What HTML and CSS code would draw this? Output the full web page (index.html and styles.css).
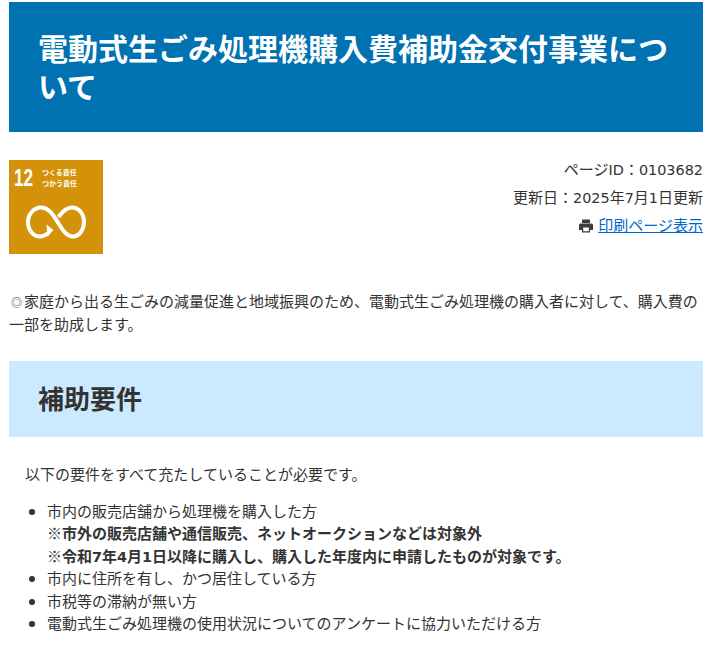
FILE: index.html
```html
<!DOCTYPE html>
<html lang="ja">
<head><meta charset="utf-8"><title>補助金</title><link rel="stylesheet" href="styles.css"></head>
<body>
<h1 class="title">電動式生ごみ処理機購入費補助金交付事業について</h1>
<div class="meta">
  <div class="sdg">
    <div class="sdg-head"><span class="sdg-num">12</span><span class="sdg-label">つくる責任<br>つかう責任</span></div>
    <svg class="sdg-icon" viewBox="0 0 60 36" width="60" height="36" fill="none" stroke="#fff" stroke-width="4"><path d="M23 28.500C20 31 17 32.500 14 32.500C7 32.500 2 26 2 18C2 10 8 3.500 15 3.500C22 3.500 26 9 31 17C36 25 40 32.500 47 32.500C53 32.500 58 26 58 18C58 10 53 3.500 46 3.500C40 3.500 36 8 32.500 13"/><path fill="#fff" stroke="none" d="M27.500 26L20.500 20.500L21.500 32.500Z"/></svg>
  </div>
  <div class="info">
    <p>ページ<span class="latin">ID</span>：<span class="latin">0103682</span></p>
    <p>更新日：<span class="latin">2025</span>年<span class="latin">7</span>月<span class="latin">1</span>日更新</p>
    <p><svg class="printer" viewBox="0 0 16 16" width="16" height="16"><path fill="#3c3c3c" fill-rule="evenodd" d="M4 1.500h8V5H4zM2.500 5.500h11A1.500 1.500 0 0 1 15 7v5h-3v2.500H4V12H1V7a1.500 1.500 0 0 1 1.500-1.500zM5.200 9.500v3.800h5.600V9.500z"/></svg><a href="#">印刷ページ表示</a></p>
  </div>
</div>
<p class="lead"><span class="mark">&#9678;</span>家庭から出る生ごみの減量促進と地域振興のため、電動式生ごみ処理機の購入者に対して、購入費の一部を助成します。</p>
<h2 class="section">補助要件</h2>
<p class="intro">以下の要件をすべて充たしていることが必要です。</p>
<ul class="list">
  <li>市内の販売店舗から処理機を購入した方<br><strong>※市外の販売店舗や通信販売、ネットオークションなどは対象外</strong><br><strong>※令和<span class="latin">7</span>年<span class="latin">4</span>月<span class="latin">1</span>日以降に購入し、購入した年度内に申請したものが対象です。</strong></li>
  <li>市内に住所を有し、かつ居住している方</li>
  <li>市税等の滞納が無い方</li>
  <li>電動式生ごみ処理機の使用状況についてのアンケートに協力いただける方</li>
</ul>
</body>
</html>
```
FILE: styles.css
```css
html, body { margin: 0; padding: 0; }
body { background: #fff; color: #333; font-family: "Noto Sans CJK JP", "Noto Sans", sans-serif; font-size: 15px; line-height: 22.5px; padding: 2px 20px 0 9px; overflow: hidden; }
.latin { font-family: "DejaVu Sans", sans-serif; font-size: 14.400px; line-height: 1; }
.title { margin: 0; background: #0071b1; color: #fff; font-size: 30px; line-height: 37.5px; font-weight: 700; padding: 27px 29px 28px; }
.meta { display: flex; justify-content: space-between; margin-top: 28px; }
.sdg { width: 94px; height: 94px; background: #d3920a; display: flex; flex-direction: column; color: #fff; }
.sdg-head { display: flex; gap: 3px; padding: 6px 0 0 5px; }
.sdg-num { font-family: "Liberation Sans", sans-serif; font-weight: 700; font-size: 23px; line-height: 24px; transform: scaleX(.75); transform-origin: left; width: 25px; }
.sdg-label { font-size: 7px; line-height: 11px; font-weight: 700; padding-top: 1px; }
.sdg-icon { margin: 14px 0 0 17px; }
.info { text-align: right; margin-top: -2px; }
.info p { margin: 0 0 5.500px; line-height: 22.500px; }
.printer { vertical-align: -3px; margin-right: 4px; }
a { color: #0066cc; }
.lead { margin: 36px 0 0; }
.mark { font-size: 11px; line-height: 1; padding: 0 2px; }
.section { margin: 26px 0 0; background: #cceaff; font-size: 26px; line-height: 36px; font-weight: 700; padding: 19px 29px 21px; color: #333; }
.intro { margin: 26px 0 0 16px; }
.list { margin: 14px 0 0; padding: 0 0 0 38px; }
```
